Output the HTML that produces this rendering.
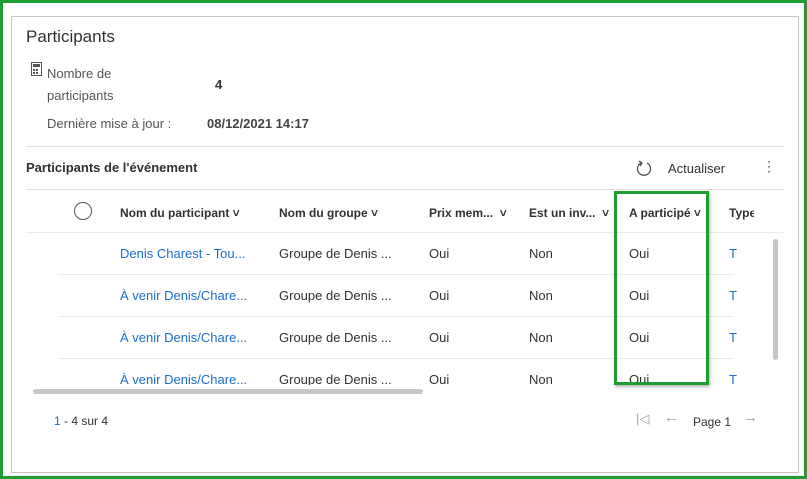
<!DOCTYPE html><html><head><style>
body{margin:0;width:807px;height:479px;overflow:hidden;background:#fff;font-family:"Liberation Sans",sans-serif;color:#323130}
.a{position:absolute;white-space:nowrap}
.t{font-size:13px}
.h{font-size:12px;font-weight:bold;color:#323130}
.l{color:#1a6fc9}
.hl{position:absolute;height:1px;background:#edebe9}
</style></head><body>
<div class="a" style="left:0;top:0;width:801px;height:473px;border:3px solid #1e9e32"></div>
<div class="a" style="left:11px;top:16px;width:786px;height:455px;border:1px solid #c8c6c4"></div>
<div class="a" style="left:26px;top:27px;font-size:17px">Participants</div>
<svg class="a" style="left:31px;top:62px" width="11" height="14"><rect x="0.5" y="0.5" width="10" height="13" fill="none" stroke="#555"/><rect x="2" y="2" width="7" height="3" fill="#555"/><g fill="#555"><rect x="2" y="7" width="2" height="2"/><rect x="5" y="7" width="2" height="2"/><rect x="2" y="10" width="2" height="2"/><rect x="5" y="10" width="2" height="2"/></g></svg>
<div class="a t" style="left:47px;top:63px;color:#555;line-height:22px">Nombre de<br>participants</div>
<div class="a t" style="left:215px;top:77px;font-weight:bold">4</div>
<div class="a t" style="left:47px;top:116px;color:#555">Dernière mise à jour :</div>
<div class="a t" style="left:207px;top:116px;font-weight:bold;color:#444">08/12/2021 14:17</div>
<div class="hl" style="left:26px;top:146px;width:758px;background:#e1dfdd"></div>
<div class="a t" style="left:26px;top:160px;font-weight:bold">Participants de l'événement</div>
<svg class="a" style="left:636px;top:160px" width="17" height="17"><path d="M5 3 A6.5 6.5 0 1 0 11 3" fill="none" stroke="#444" stroke-width="1.2"/><path d="M3 1 L6 3 L4 6" fill="none" stroke="#444" stroke-width="1.2"/></svg>
<div class="a t" style="left:668px;top:161px">Actualiser</div>
<div class="a" style="left:762px;top:158px;font-size:14px;color:#555">⋮</div>
<div class="hl" style="left:26px;top:189px;width:758px;background:#e1dfdd"></div>
<div class="a" style="left:74px;top:202px;width:16px;height:16px;border:1px solid #555;border-radius:50%"></div>
<div class="a h" style="left:120px;top:206px">Nom du participant ˅</div>
<div class="a h" style="left:279px;top:206px">Nom du groupe ˅</div>
<div class="a h" style="left:429px;top:206px">Prix mem... &nbsp;˅</div>
<div class="a h" style="left:529px;top:206px">Est un inv... &nbsp;˅</div>
<div class="a h" style="left:629px;top:206px">A participé ˅</div>
<div class="a h" style="left:729px;top:206px;width:25px;overflow:hidden">Type</div>
<div class="hl" style="left:26px;top:232px;width:758px"></div>
<div class="hl" style="left:58px;top:274px;width:676px"></div>
<div class="hl" style="left:58px;top:316px;width:676px"></div>
<div class="hl" style="left:58px;top:358px;width:676px"></div>
<div style="position:absolute;left:0;top:233px;width:807px;height:152px;overflow:hidden">
<div class="a t l" style="left:120px;top:13px">Denis Charest - Tou...</div>
<div class="a t l" style="left:120px;top:55px">À venir Denis/Chare...</div>
<div class="a t l" style="left:120px;top:97px">À venir Denis/Chare...</div>
<div class="a t l" style="left:120px;top:139px">À venir Denis/Chare...</div>
<div class="a t" style="left:279px;top:13px">Groupe de Denis ...</div>
<div class="a t" style="left:279px;top:55px">Groupe de Denis ...</div>
<div class="a t" style="left:279px;top:97px">Groupe de Denis ...</div>
<div class="a t" style="left:279px;top:139px">Groupe de Denis ...</div>
<div class="a t" style="left:429px;top:13px">Oui</div><div class="a t" style="left:429px;top:55px">Oui</div><div class="a t" style="left:429px;top:97px">Oui</div><div class="a t" style="left:429px;top:139px">Oui</div>
<div class="a t" style="left:529px;top:13px">Non</div><div class="a t" style="left:529px;top:55px">Non</div><div class="a t" style="left:529px;top:97px">Non</div><div class="a t" style="left:529px;top:139px">Non</div>
<div class="a t" style="left:629px;top:13px">Oui</div><div class="a t" style="left:629px;top:55px">Oui</div><div class="a t" style="left:629px;top:97px">Oui</div><div class="a t" style="left:629px;top:139px">Oui</div>
<div class="a t l" style="left:729px;top:13px">T</div><div class="a t l" style="left:729px;top:55px">T</div><div class="a t l" style="left:729px;top:97px">T</div><div class="a t l" style="left:729px;top:139px">T</div>
</div>
<div class="a" style="left:33px;top:389px;width:390px;height:5px;background:#c8c6c4;border-radius:3px"></div>
<div class="a" style="left:773px;top:239px;width:5px;height:121px;background:#c8c6c4;border-radius:3px"></div>
<div class="a" style="left:614px;top:191px;width:89px;height:188px;border:3px solid #1e9e32;box-shadow:1px 2px 3px rgba(0,0,0,.3)"></div>
<div class="a" style="left:54px;top:414px;font-size:12px"><span style="color:#1a6fc9">1</span> - 4 sur 4</div>
<div class="a" style="left:636px;top:411px;font-size:13px;color:#a19f9d">|◁</div>
<div class="a" style="left:664px;top:409px;font-size:15px;color:#a19f9d">←</div>
<div class="a" style="left:693px;top:415px;font-size:12px">Page 1</div>
<div class="a" style="left:743px;top:409px;font-size:15px;color:#a19f9d">→</div>
</body></html>
